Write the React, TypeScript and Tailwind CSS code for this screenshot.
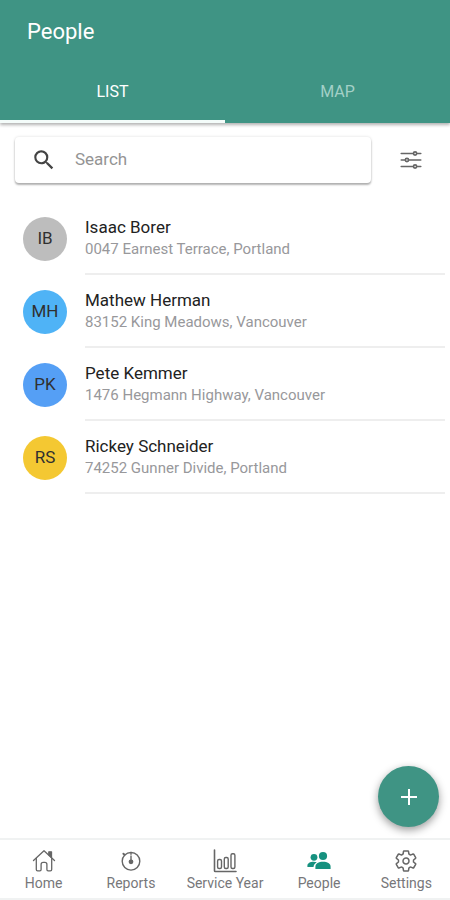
import type { ReactNode } from 'react';
import { IoOptionsOutline, IoSettingsOutline } from 'react-icons/io5';
import { MdSearch } from 'react-icons/md';

interface Person {
  initials: string;
  name: string;
  address: string;
  color: string;
}

interface NavItemProps {
  label: string;
  icon: ReactNode;
  active?: boolean;
}

const people: Person[] = [
  { initials: 'IB', name: 'Isaac Borer', address: '0047 Earnest Terrace, Portland', color: 'bg-[#bdbdbd]' },
  { initials: 'MH', name: 'Mathew Herman', address: '83152 King Meadows, Vancouver', color: 'bg-[#4fb3f6]' },
  { initials: 'PK', name: 'Pete Kemmer', address: '1476 Hegmann Highway, Vancouver', color: 'bg-[#559ff5]' },
  { initials: 'RS', name: 'Rickey Schneider', address: '74252 Gunner Divide, Portland', color: 'bg-[#f4c832]' },
];

const HomeIcon = () => (
  <svg viewBox="0 0 24 24" className="size-6" fill="none" stroke="currentColor" strokeWidth="1.3" strokeLinecap="round" strokeLinejoin="round">
    <path d="M1.5 11.500 12 1.800l10.500 9.700" />
    <path d="M16.800 5.800V2.800h2.700v5.700z" fill="currentColor" />
    <path d="M4.300 9.500v11c0 .8.500 1.300 1.300 1.300h2.300c.7 0 1.200-.4 1.200-1.200v-5.200c0-1.300.9-2.100 2.100-2.100h1.600c1.200 0 2.100.8 2.100 2.100v5.200c0 .8.500 1.200 1.200 1.200h2.300c.8 0 1.300-.5 1.300-1.300v-11" />
  </svg>
);

const TimerIcon = () => (
  <svg viewBox="0 0 24 24" className="size-6" fill="none" stroke="currentColor" strokeWidth="1.4" strokeLinecap="round">
    <circle cx="12" cy="12.300" r="8.800" />
    <path d="M12 7v5M12 3.500v1.800" />
    <path d="M4.400 4.700l1.200 1.200" strokeWidth="2" />
    <circle cx="12" cy="12.800" r="1.700" fill="currentColor" />
  </svg>
);

const ChartIcon = () => (
  <svg viewBox="0 0 24 24" className="size-6" fill="none" stroke="currentColor" strokeWidth="1.4" strokeLinecap="round" strokeLinejoin="round">
    <path d="M1.500 1v20.700c0 .5.300.8.800.8h20.700" strokeWidth="1.600" />
    <rect x="4.600" y="10.500" width="3.900" height="9" rx="1.500" />
    <rect x="11.300" y="8.500" width="3.900" height="11" rx="1.500" />
    <rect x="18" y="4.700" width="3.900" height="14.800" rx="1.500" />
  </svg>
);

const PeopleIcon = () => (
  <svg viewBox="0 0 24 24" className="size-6" fill="currentColor">
    <circle cx="16" cy="7" r="4.100" />
    <path d="M8.400 20v-2.300c0-3 3.300-4.900 7.600-4.900s7.600 1.900 7.600 4.900V20z" />
    <circle cx="7" cy="8.300" r="3.400" />
    <path d="M9.800 13.300c-2 1.100-3.100 2.600-3.300 4.700H.4v-1.300c0-2.500 2.700-4 6.300-4 1.100 0 2.200.2 3.100.6z" />
  </svg>
);

const PersonRow = ({ initials, name, address, color }: Person) => {
  return (
    <li className="flex h-[73px] items-center gap-[18px] pl-[23px]">
      <div className={`flex size-11 shrink-0 items-center justify-center rounded-full text-[17px] text-[#303030] ${color}`}>
        {initials}
      </div>
      <div className="flex h-full min-w-0 flex-1 flex-col justify-center border-b-2 border-[#eeeeee]">
        <h2 className="truncate text-[17px] leading-[22px] text-[#222222]">{name}</h2>
        <p className="truncate text-[15px] leading-[22px] text-[#98989b]">{address}</p>
      </div>
    </li>
  );
};

const NavItem = ({ label, icon, active }: NavItemProps) => {
  return (
    <a
      href="#"
      aria-current={active ? 'page' : undefined}
      className="flex flex-auto basis-0 flex-col items-center px-3 pt-[9px] text-[#666666]"
    >
      <span className={active ? 'text-[#16917f]' : ''}>{icon}</span>
      <span className="text-sm leading-5 whitespace-nowrap text-[#77777a]">{label}</span>
    </a>
  );
};

const App = () => {
  return (
    <div className="flex min-h-screen flex-col bg-white font-[Roboto,sans-serif]">
      <header className="bg-[#3f9484] text-white shadow-[0_2px_3px_rgba(0,0,0,0.3)]">
        <h1 className="px-[27px] pt-4 pb-7 text-[22px] leading-8">People</h1>
        <div role="tablist" className="grid h-[47px] grid-cols-2 text-base leading-5">
          <button role="tab" aria-selected="true" className="border-b-3 border-[#f4fcfa] pb-3">
            LIST
          </button>
          <button role="tab" aria-selected="false" className="border-b-3 border-transparent pb-3 text-[#a3d0c7]">
            MAP
          </button>
        </div>
      </header>

      <main className="flex-1">
        <div className="flex items-center pt-[14px] pl-[15px]">
          <label className="flex h-[46px] flex-1 items-center rounded-sm bg-white pl-4 shadow-[0_2px_2px_rgba(0,0,0,0.28),0_0_3px_rgba(0,0,0,0.14)]">
            <MdSearch className="size-[26px] shrink-0 text-[#444444]" />
            <input
              type="search"
              aria-label="Search"
              placeholder="Search"
              className="ml-[18px] min-w-0 flex-1 bg-transparent text-[17px] outline-none placeholder:text-[#949494]"
            />
          </label>
          <button aria-label="Filters" className="flex w-[79px] justify-center text-[#666666]">
            <IoOptionsOutline className="size-[26px]" />
          </button>
        </div>

        <ul className="mt-[19px] pr-[5px]">
          {people.map((person) => (
            <PersonRow key={person.name} {...person} />
          ))}
        </ul>
      </main>

      <button
        aria-label="Add person"
        className="fixed right-[11px] bottom-[73px] flex size-[61px] items-center justify-center rounded-full bg-[#3f9484] text-white shadow-[0_3px_8px_rgba(0,0,0,0.4)]"
      >
        <svg viewBox="0 0 24 24" className="size-6" stroke="currentColor" strokeWidth="2">
          <path d="M12 4v16M4 12h16" />
        </svg>
      </button>

      <nav className="sticky bottom-0 flex h-[62px] border-y-2 border-[#f0f2f2] bg-white">
        <NavItem label="Home" icon={<HomeIcon />} />
        <NavItem label="Reports" icon={<TimerIcon />} />
        <NavItem label="Service Year" icon={<ChartIcon />} />
        <NavItem label="People" icon={<PeopleIcon />} active />
        <NavItem label="Settings" icon={<IoSettingsOutline className="size-6" />} />
      </nav>
    </div>
  );
};

export default App;
